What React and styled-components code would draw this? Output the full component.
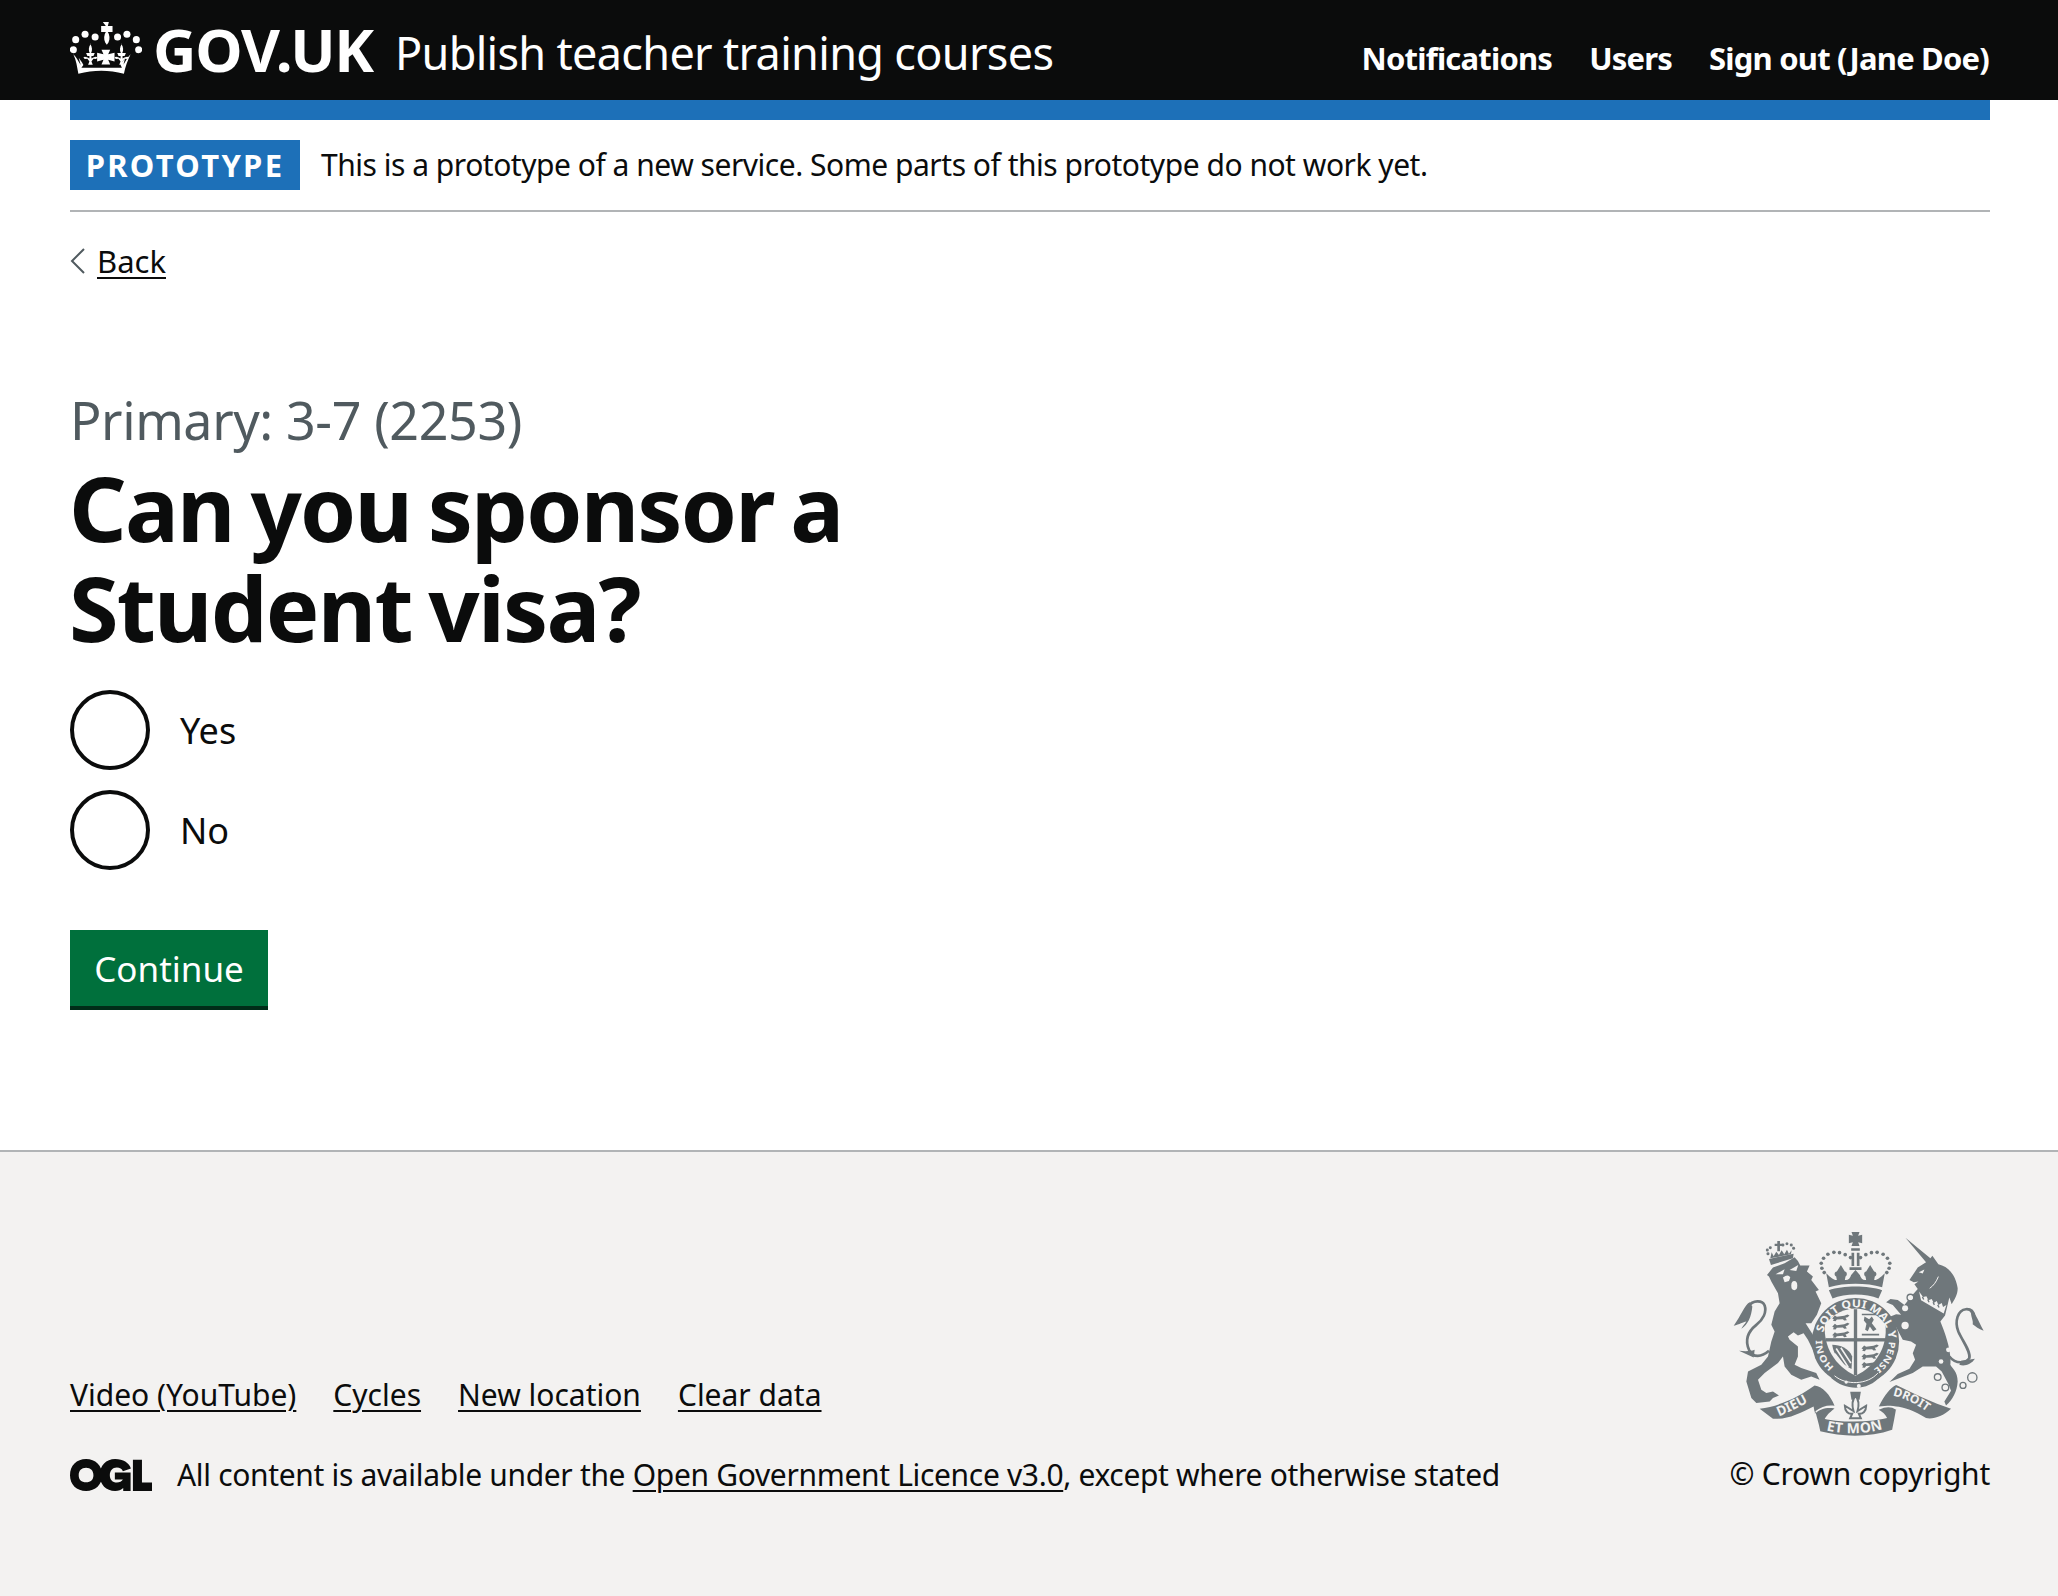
import React from 'react';
import styled, { createGlobalStyle } from 'styled-components';

const Global = createGlobalStyle`
  html, body { margin: 0; padding: 0; background: #fff; }
  body { font-family: "Noto Sans", "Liberation Sans", sans-serif; color: #0b0c0c; }
`;
const Page = styled.div`min-height: 1596px; display: flex; flex-direction: column;`;
const Header = styled.header`height: 100px; background: #0b0c0c; box-sizing: border-box; padding: 0 69px 0 70px; display: flex; justify-content: space-between; align-items: flex-start;`;
const Brand = styled.div`display: flex; align-items: flex-start;`;
const CrownSvg = styled.svg`margin-top: 21px; flex: none;`;
const Logo = styled.span`font: 700 60px/98px "Noto Sans", sans-serif; letter-spacing: -1.2px; color: #fff; margin-left: 11px; margin-right: 22px;`;
const Service = styled.span`font: 400 45px/106px "Noto Sans", sans-serif; color: #fff; letter-spacing: -.68px;`;
const Nav = styled.nav`display: flex; gap: 37px; padding-top: 37px;`;
const NavLink = styled.a`font: 700 31px/42px "Noto Sans", sans-serif; color: #fff; letter-spacing: -.8px;`;
const Container = styled.main`margin: 0 68px 0 70px; flex: 1;`;
const PhaseBar = styled.div`border-top: 20px solid #1d70b8;`;
const PhaseInner = styled.div`padding: 20px 0; border-bottom: 2px solid #b1b4b6; display: flex; align-items: center; gap: 21px;`;
const Tag = styled.strong`height: 50px; width: 230px; background: #1d70b8; color: #fff; font: 700 31px/50px "Noto Sans", sans-serif; letter-spacing: 2.3px; text-align: center;`;
const PhaseText = styled.span`font-size: 30px; line-height: 40px; letter-spacing: -.48px;`;
const Back = styled.a`display: inline-flex; align-items: center; margin-top: 29px; gap: 11px; font-size: 31px; line-height: 40px; color: #0b0c0c;`;
const BackText = styled.span`text-decoration: underline; text-underline-offset: 4px; text-decoration-thickness: 2px;`;
const Caption = styled.div`margin-top: 109px; font-size: 52px; line-height: 60px; color: #505a5f; letter-spacing: -.4px;`;
const Title = styled.h1`margin: 7px 0 0 -1px; font: 700 90px/100px "Noto Sans", sans-serif; letter-spacing: -1.8px; word-spacing: -5px; width: 900px;`;
const Radios = styled.div`margin-top: 33px; display: flex; flex-direction: column; gap: 20px;`;
const RadioRow = styled.label`display: flex; align-items: center; gap: 30px; height: 80px; font-size: 36px;`;
const RadioCircle = styled.span`width: 80px; height: 80px; box-sizing: border-box; border: 4px solid #0b0c0c; border-radius: 50%;`;
const Button = styled.button`display: block; margin-top: 60px; width: 198px; height: 80px; border: 0; border-bottom: 4px solid #002d18; background: #00703c; color: #fff; font: 400 35px/40px "Noto Sans", sans-serif; padding: 2px 0 0;`;
const Footer = styled.footer`height: 446px; box-sizing: border-box; background: #f3f2f1; border-top: 2px solid #b1b4b6; padding: 78px 68px 0 70px; display: flex; justify-content: space-between;`;
const FooterLeft = styled.div`padding-top: 145px;`;
const FooterLinks = styled.div`display: flex; gap: 37px;`;
const FootLink = styled.a`font-size: 30px; line-height: 40px; color: #0b0c0c; text-decoration: underline; text-underline-offset: 4px; text-decoration-thickness: 2px;`;
const Licence = styled.div`margin-top: 40px; display: flex; align-items: center; gap: 25px; font-size: 30px; line-height: 40px; letter-spacing: -.33px;`;
const Copyright = styled.div`display: flex; flex-direction: column; align-items: flex-end;`;
const CrestSvg = styled.svg`margin-right: 4px;`;
const CopyText = styled.span`margin-top: 16px; font-size: 30px; line-height: 40px; letter-spacing: -.24px;`;

const Crown = () => (
  <CrownSvg width="72" height="54" viewBox="30 33 215 160" fill="#fff">
    <path d="M128 35h18l-3 12h14v18h-14l3 6c4 12 2 24-6 32-8-8-10-20-6-32l3-6h-14V47h14z"/>
    {[[75,72],[47,88],[40,118],[105,80],[172,80],[200,72],[228,88],[235,118]].map(([x,y]) => <circle key={x+'-'+y} cx={x} cy={y} r="10.500"/>)}
    <path d="M90 100c7 10 7 20 3 28h11l-4 9h-6v7c8-4 14-7 18-3l-4 5-8-1-6 8 4 10H84l4-10-6-8-8 1-4-5c4-4 10-1 18 3v-7h-6l-4-9h11c-4-8-4-18 3-28z"/>
    <path d="M183 100c7 10 7 20 3 28h11l-4 9h-6v7c8-4 14-7 18-3l-4 5-8-1-6 8 4 10h-14l4-10-6-8-8 1-4-5c4-4 10-1 18 3v-7h-6l-4-9h11c-4-8-4-18 3-28z"/>
    <path d="M124 118h26l-6 14 19-5v26l-19-5 6 14h-26l6-14-19 5v-26l19 5z"/>
    <path d="M40 132c10 10 15 22 22 32l-6-22 10 14 4 8-6 8 18 0h7 96l-4-8 4-8 10-14-6 22c7-10 12-22 22-32-9 18-16 38-20 58-45-12-90-12-136 0-4-20-6-40-15-58z"/>
  </CrownSvg>
);
const Ogl = () => (
  <svg width="82" height="32" viewBox="30 35 245 95" fill="#0b0c0c">
    <path fillRule="evenodd" d="M78 35c-28 0-48 20-48 48s20 47 48 47 48-19 48-47-20-48-48-48zm0 26c14 0 22 9 22 22s-8 21-22 21-22-8-22-21 8-22 22-22z"/>
    <path d="M165 35c-27 0-46 20-46 48s19 47 46 47c10 0 18-3 24-9v9h22V75h-47v21h24c-3 6-10 9-18 9-13 0-21-9-21-22s8-23 21-23c9 0 15 4 18 11l24-8c-6-17-23-28-47-28z"/>
    <path d="M218 37h27v68h30v25h-57z"/>
  </svg>
);
const C = '#6f777b', B = '#f3f2f1';
const Quarter = ({ y, x }) => (
  <g transform={`translate(${x} ${y})`}>
    {[0, 25, 50].map(d => (
      <path key={d} d={`M6 ${d + 14}l8-9 6 4 22-3 10-4 6 3-6 5-6 2 4 7-8 1-4-4-18 1-4 5-8-1 3-5z`} />
    ))}
  </g>
);
const Crest = () => (
  <CrestSvg width="253" height="208" viewBox="100 60 760 625" fill={C} fontFamily='"Noto Sans", sans-serif' fontWeight="700">
    <defs>
      <path id="g-top" d="M371 369 A100 100 0 0 1 568 385"/>
      <path id="g-left" d="M404 472 A100 100 0 0 1 369 378"/>
      <path id="g-right" d="M568 395 A100 100 0 0 1 525 477"/>
      <path id="r1" d="M238 620 C270 607 320 582 358 558"/>
      <path id="r2" d="M380 662 C430 674 500 674 552 657"/>
      <path id="r3" d="M580 558 C620 566 670 592 698 620"/>
    </defs>

    {/* lion */}
    <g transform="translate(90 45)">
      <path d="M112 150 L130 128 L165 115 L195 97 L205 108 L212 122 L240 122 L232 140 L250 155 L245 165 L268 195 L258 200 L275 235 L262 270 L245 295 L228 295 L250 330 L275 375 L265 380 L255 385 L245 365 L235 345 L222 325 L205 332 L192 322 L175 335 L180 345 L205 365 L205 395 L195 420 L215 430 L260 445 L270 465 L245 455 L215 465 L185 450 L165 425 L160 395 L145 415 L105 445 L85 465 L95 495 L110 505 L130 500 L148 512 L130 520 L120 530 L80 535 L65 520 L50 470 L55 440 L95 420 L115 395 L125 350 L135 320 L125 300 L135 260 L150 235 L145 205 L125 170 L118 155 Z"/>
      <path d="M118 378 C95 398 70 400 58 375 C45 345 55 320 80 300 C100 285 112 262 105 242 C98 225 70 225 55 245" fill="none" stroke={C} strokeWidth="8"/>
      <path d="M60 232 C45 240 35 270 12 303 C30 298 40 292 50 290 C45 298 38 305 35 312 C55 300 65 275 68 245 Z"/>
      <path d="M72 398 L28 378 C45 380 62 380 75 375 Z"/>
      <g fill={B}>
        <path d="M138 148 L165 133 L160 148 Z"/>
        <path d="M180 135 L206 120 L200 138 Z"/>
        <path d="M160 158 C170 150 178 150 182 158 L178 168 L165 172 Z"/>
        <ellipse cx="194" cy="182" rx="9" ry="14"/>
      </g>
      <path d="M118 102 L192 86 L190 100 L124 120 Z"/>
      {[[115,86],[113,75],[122,68],[160,60],[172,56],[185,60],[192,70]].map(([x,y]) => <circle key={x} cx={x} cy={y} r="4.500"/>)}
      <path d="M143 48h8v8h8v7h-8v16h-8V63h-8v-7h8z"/>
      <path d="M122 100 l4-18 6 12 8-14 8 10 8-14 8 12 8-14 6 12 8-10 -2 12z"/>
    </g>

    {/* unicorn */}
    <g transform="translate(465 45)">
      <path d="M153 38 L228 100 L234 92 L252 118 C285 125 305 155 310 190 C310 210 300 225 292 238 L285 218 L272 272 L258 290 C270 320 292 375 288 420 C292 430 310 440 310 470 C308 500 295 525 275 542 L270 530 L290 498 L282 478 L262 440 L245 425 L205 425 L175 445 L105 472 L130 448 L165 432 L182 405 L175 385 L185 360 L170 350 L145 345 L108 275 L125 268 L140 270 L115 240 L95 232 L108 222 L130 225 L150 240 L170 215 L190 192 L180 178 L192 170 L178 172 L165 165 L190 128 L215 112 Z"/>
      <path d="M285 395 C305 420 335 415 345 400 C350 380 325 350 312 320 C300 290 310 255 335 253 C350 252 358 262 360 275" fill="none" stroke={C} strokeWidth="8"/>
      <path d="M340 250 C360 252 370 285 388 318 C372 312 365 305 355 298 C358 290 350 275 350 265 Z"/>
      <path d="M320 408 L362 402 C350 420 330 425 315 420 Z"/>
      <path d="M194 200 L200 226 L268 266 L276 240 L266 246 L262 234 L252 240 L247 228 L238 234 L232 222 L222 226 L216 214 L206 216 Z" fill={B}/>
      <path d="M204 216 L208 224 M220 224 L224 232 M236 232 L240 240 M250 240 L254 248" stroke={C} strokeWidth="4"/>
      <path d="M252 155 C246 170 238 182 226 190" fill="none" stroke={B} strokeWidth="3"/>
      <path d="M193 142 L210 134 L205 146 Z" fill={B}/>
      <g fill={B}>
        <circle cx="152" cy="250" r="9"/><circle cx="168" cy="218" r="9"/><circle cx="152" cy="302" r="11"/>
        <circle cx="290" cy="328" r="10"/><circle cx="282" cy="375" r="7"/><circle cx="260" cy="410" r="7"/>
      </g>
      <g fill="none" stroke={C} strokeWidth="4">
        <circle cx="168" cy="218" r="10"/><circle cx="250" cy="457" r="10"/><circle cx="273" cy="488" r="10"/><circle cx="326" cy="482" r="9"/><circle cx="354" cy="458" r="14"/>
      </g>
    </g>

    {/* royal crown */}
    <path d="M456 66h24l-4 11 12-3v26l-12-3 4 11h-24l4-11-12 3V74l12 3z"/>
    <path d="M455 115 h26 v7 h-26z M456 128 h8 v40 h-8z M472 128 h8 v40 h-8z M450 172 h36 v8 h-36z"/>
    <g>{[[367,175],[365,160],[372,145],[385,133],[403,127],[420,128],[437,134],[453,143],[483,143],[499,134],[516,128],[533,127],[551,133],[564,145],[571,160],[569,175],[562,188],[374,188]].map(([x,y]) => <circle key={x+'-'+y} cx={x} cy={y} r="5.500"/>)}</g>
    <path d="M380 190 C395 205 405 212 412 210 L410 200 C402 195 405 185 412 185 L424 165 L436 185 C443 186 444 195 438 200 L436 210 C445 212 452 205 455 195 L468 180 L481 195 C484 205 491 212 500 210 L498 200 C492 195 493 186 500 185 L512 165 L524 185 C531 185 534 195 526 200 L524 210 C531 212 541 205 556 190 L548 232 C500 218 436 218 388 232 Z"/>
    <path d="M388 241 C430 226 506 226 548 241 L537 266 C500 250 436 250 399 266 Z"/>

    {/* garter and shield */}
    <circle cx="468" cy="395" r="131"/>
    <path d="M376 345 C400 310 440 296 468 296 C496 296 535 310 558 345 C565 410 530 470 468 498 C406 470 371 410 376 345 Z" fill={B}/>
    <rect x="463" y="298" width="10" height="198"/>
    <rect x="378" y="385" width="180" height="10"/>
    <Quarter x={392} y={312}/>
    <Quarter x={480} y={402}/>
    <path d="M495 320 l14 8 8 -8 6 10 -6 10 14 18 -10 6 -10 -14 -6 14 -8 -4 4 -18 -8 -10z M487 372 h52 v5 h-52z M487 312 h50 v4 h-50z"/>
    <path d="M398 405 C422 405 448 416 458 440 L456 478 C426 462 402 438 398 405 Z"/>
    <path d="M410 416 L446 472 M424 414 L454 460 M406 432 L432 466" stroke={B} strokeWidth="5"/>
    <g fill={B}>
      <text fontSize="33"><textPath href="#g-top" textLength="285" lengthAdjust="spacingAndGlyphs">SOIT QUI MAL Y</textPath></text>
      <text fontSize="27"><textPath href="#g-left" textLength="92" lengthAdjust="spacingAndGlyphs">HONI</textPath></text>
      <text fontSize="27"><textPath href="#g-right" textLength="100" lengthAdjust="spacingAndGlyphs">PENSE</textPath></text>
    </g>
    <path d="M395 505 C440 545 505 545 545 498 L530 478 C500 512 440 520 408 488 Z"/>
    <path d="M405 498 C440 528 505 525 535 490" fill="none" stroke={B} strokeWidth="3"/>
    <circle cx="478" cy="529" r="6" fill={B}/><circle cx="440" cy="517" r="5" fill={B}/>

    {/* fleur-de-lis */}
    <path d="M452 546 h32 l-4 24 h-24z"/>
    <path d="M468 558 C480 572 478 590 474 604 L500 588 C500 604 490 614 478 612 L484 626 H452 L458 612 C446 614 436 604 436 588 L462 604 C458 590 456 572 468 558 Z" fill={B} stroke={C} strokeWidth="6"/>

    {/* ribbon */}
    <path d="M180 597 C240 590 300 560 345 527 C370 530 392 555 405 588 C385 585 365 590 345 606 L342 590 C300 612 260 630 220 627 Z"/>
    <path d="M346 596 C350 620 358 640 362 664 L374 630 C385 610 395 605 405 596 C385 592 360 596 346 612 Z"/>
    <path d="M360 624 C420 640 510 640 576 622 L578 660 C510 684 430 682 362 665 Z"/>
    <path d="M590 596 C586 620 582 640 578 660 L566 630 C556 610 546 605 538 600 C560 590 575 590 590 600 Z"/>
    <path d="M538 590 C556 555 572 535 590 526 C640 550 700 580 755 597 C730 620 700 630 680 625 C650 605 610 590 590 590 C572 586 556 590 538 590 Z"/>
    <g fill={B}>
      <text fontSize="40"><textPath href="#r1">DIEU</textPath></text>
      <text fontSize="42"><textPath href="#r2" textLength="172">ET MON</textPath></text>
      <text fontSize="36"><textPath href="#r3">DROIT</textPath></text>
    </g>
  </CrestSvg>
);

export default function App() {
  return (
    <Page>
      <Global />
      <Header>
        <Brand>
          <Crown />
          <Logo>GOV.UK</Logo>
          <Service>Publish teacher training courses</Service>
        </Brand>
        <Nav>
          <NavLink>Notifications</NavLink>
          <NavLink>Users</NavLink>
          <NavLink>Sign out (Jane Doe)</NavLink>
        </Nav>
      </Header>
      <Container>
        <PhaseBar>
          <PhaseInner>
            <Tag>PROTOTYPE</Tag>
            <PhaseText>This is a prototype of a new service. Some parts of this prototype do not work yet.</PhaseText>
          </PhaseInner>
        </PhaseBar>
        <Back>
          <svg width="16" height="26" viewBox="0 0 16 26" fill="none" stroke="#505a5f" strokeWidth="2"><path d="M14 1 L2 13 L14 25"/></svg>
          <BackText>Back</BackText>
        </Back>
        <Caption>Primary: 3-7 (2253)</Caption>
        <Title>Can you sponsor a Student visa?</Title>
        <Radios>
          <RadioRow><RadioCircle />Yes</RadioRow>
          <RadioRow><RadioCircle />No</RadioRow>
        </Radios>
        <Button>Continue</Button>
      </Container>
      <Footer>
        <FooterLeft>
          <FooterLinks>
            <FootLink>Video (YouTube)</FootLink>
            <FootLink>Cycles</FootLink>
            <FootLink>New location</FootLink>
            <FootLink>Clear data</FootLink>
          </FooterLinks>
          <Licence>
            <Ogl />
            <span>All content is available under the <FootLink>Open Government Licence v3.0</FootLink>, except where otherwise stated</span>
          </Licence>
        </FooterLeft>
        <Copyright>
          <Crest />
          <CopyText>© Crown copyright</CopyText>
        </Copyright>
      </Footer>
    </Page>
  );
}
